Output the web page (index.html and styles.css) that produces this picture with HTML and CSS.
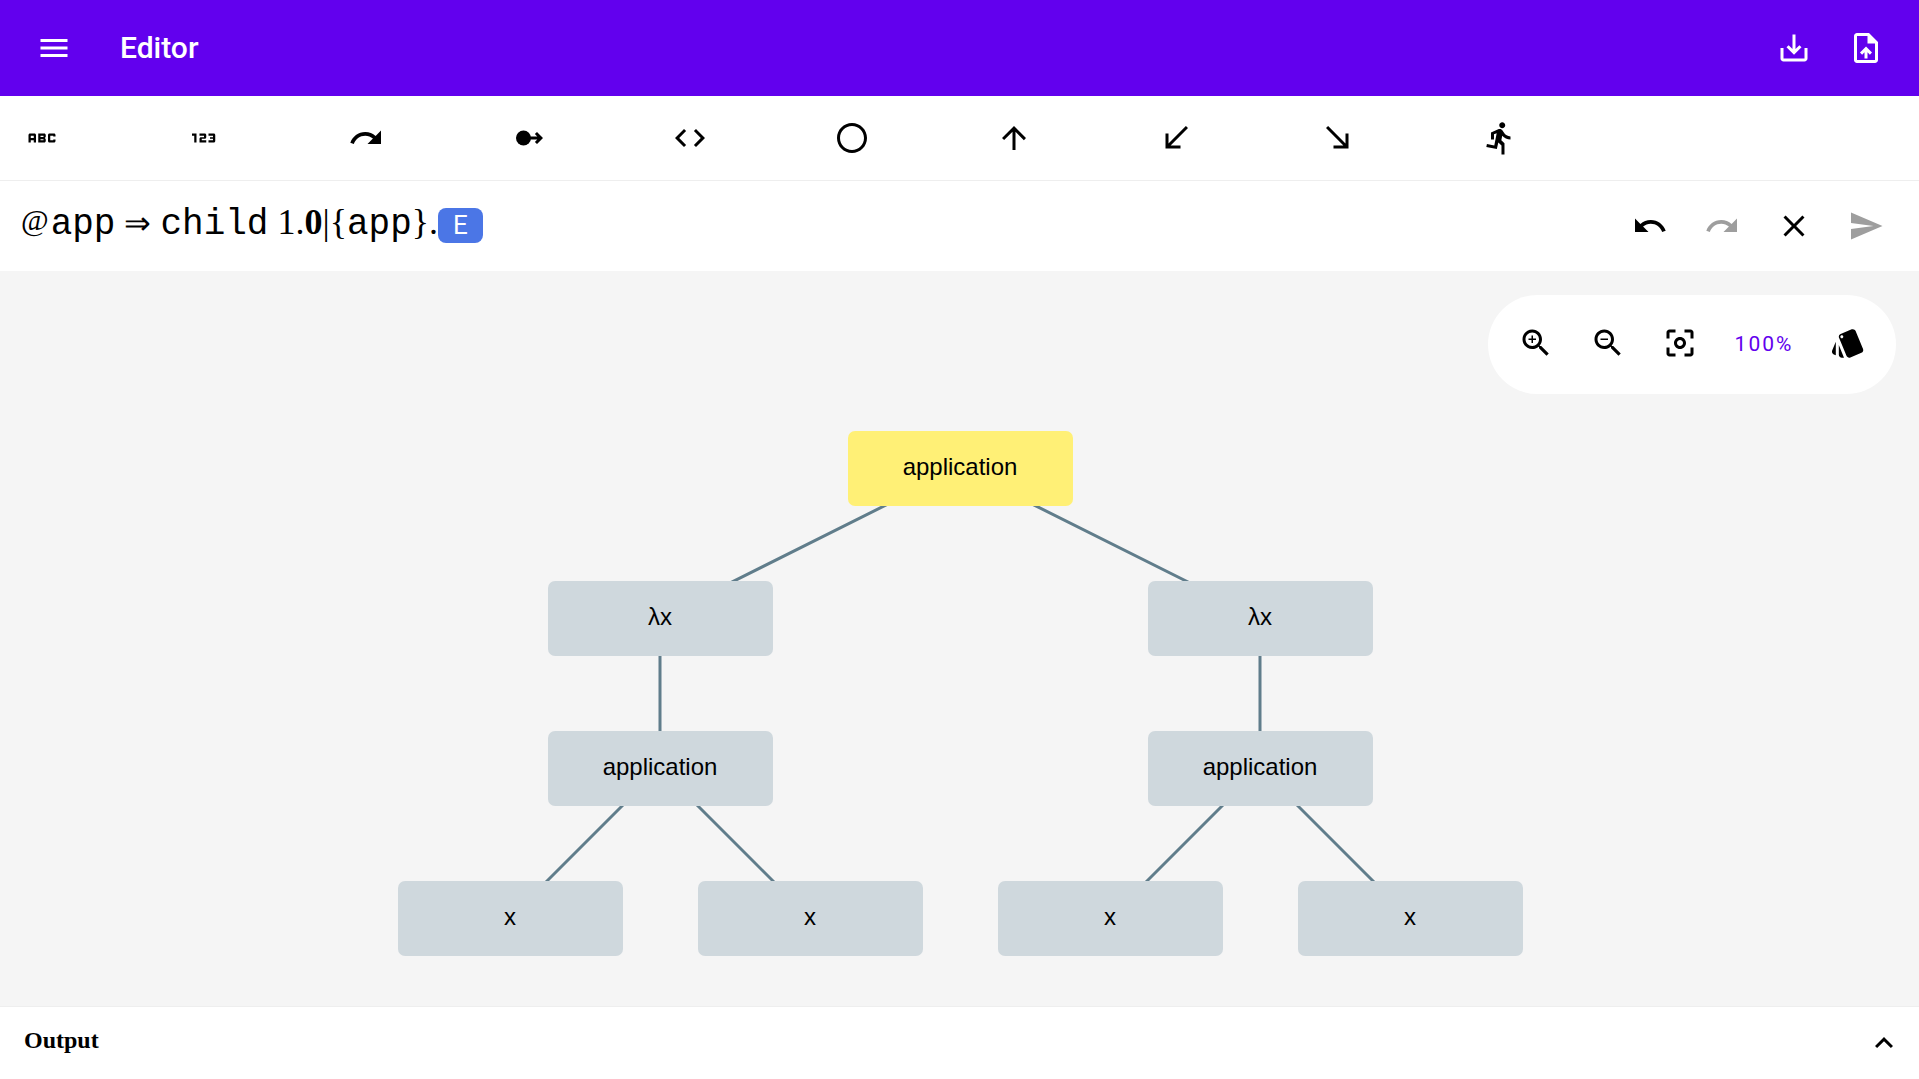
FILE: index.html
```html
<!DOCTYPE html>
<html lang="en">
<head>
<meta charset="utf-8">
<meta name="viewport" content="width=device-width, initial-scale=1">
<title>Editor</title>
<link rel="stylesheet" href="styles.css">
</head>
<body>
<header class="app-bar">
  <button class="icon-button" aria-label="Menu"><svg viewBox="0 0 24 24"><path d="M3 18h18v-2H3v2zm0-5h18v-2H3v2zm0-7v2h18V6H3z"/></svg></button>
  <h1 class="app-title">Editor</h1>
  <button class="icon-button" aria-label="Download"><svg viewBox="0 0 24 24"><path d="M19 12v7H5v-7H3v7c0 1.1.9 2 2 2h14c1.1 0 2-.9 2-2v-7h-2zm-6 .67 2.59-2.58L17 11.5l-5 5-5-5 1.41-1.41L11 12.67V3h2v9.67z"/></svg></button>
  <button class="icon-button" aria-label="Upload file"><svg viewBox="0 0 24 24"><path d="M14 2H6c-1.1 0-1.99.9-1.99 2L4 20c0 1.1.89 2 1.99 2H18c1.1 0 2-.9 2-2V8l-6-6zm4 18H6V4h7v5h5v11zM8 15.01l1.41 1.41L11 14.84V19h2v-4.16l1.59 1.59L16 15.01 12.01 11 8 15.01z"/></svg></button>
</header>

<div class="symbol-bar" role="toolbar" aria-label="Symbols">
  <button class="icon-button" aria-label="Text"><svg viewBox="0 0 24 24"><path d="M21 11h-1.5v-.5h-2v3h2V13H21v1c0 .55-.45 1-1 1h-3c-.55 0-1-.45-1-1v-4c0-.55.45-1 1-1h3c.55 0 1 .45 1 1v1zM8 10v5H6.5v-1.5h-2V15H3v-5c0-.55.45-1 1-1h3c.55 0 1 .45 1 1zm-1.5.5h-2V12h2v-1.5zm7 1.5c.55 0 1 .45 1 1v1c0 .55-.45 1-1 1h-4V9h4c.55 0 1 .45 1 1v1c0 .55-.45 1-1 1zM11 10.5v.75h2v-.75h-2zm2 2.25h-2v.75h2v-.75z"/></svg></button>
  <button class="icon-button" aria-label="Number"><svg viewBox="0 0 24 24"><path d="M7 15H5.5v-4.5H4V9h3v6zm6.5-1.5h-3v-1h2c.55 0 1-.45 1-1V10c0-.55-.45-1-1-1H9v1.5h3v1h-2c-.55 0-1 .45-1 1V15h4.5v-1.5zm6 .5v-4c0-.55-.45-1-1-1H15v1.5h3v1h-2v1h2v1h-3V15h3.5c.55 0 1-.45 1-1z"/></svg></button>
  <button class="icon-button" aria-label="Next"><svg viewBox="0 0 24 24"><path d="M18.4 10.6C16.55 8.99 14.15 8 11.5 8c-4.65 0-8.58 3.03-9.96 7.22L3.9 16c1.05-3.19 4.05-5.5 7.6-5.5 1.95 0 3.73.72 5.12 1.88L13 16h9V7l-3.6 3.6z"/></svg></button>
  <button class="icon-button" aria-label="Source"><svg viewBox="0 0 24 24"><circle cx="9" cy="12" r="5"/><path d="M18.17 11l-1.59-1.59L18 8l4 4-4 4-1.41-1.41L18.17 13H12v-2z"/></svg></button>
  <button class="icon-button" aria-label="Code"><svg viewBox="0 0 24 24"><path d="M9.4 16.6 4.8 12l4.6-4.6L8 6l-6 6 6 6 1.4-1.4zm5.2 0 4.6-4.6-4.6-4.6L16 6l6 6-6 6-1.4-1.4z"/></svg></button>
  <button class="icon-button" aria-label="Node"><svg viewBox="0 0 24 24"><path d="M12 2C6.47 2 2 6.47 2 12s4.47 10 10 10 10-4.47 10-10S17.53 2 12 2zm0 18c-4.41 0-8-3.59-8-8s3.59-8 8-8 8 3.59 8 8-3.59 8-8 8z"/></svg></button>
  <button class="icon-button" aria-label="Parent"><svg viewBox="0 0 24 24"><path d="m4 12 1.41 1.41L11 7.83V20h2V7.83l5.58 5.59L20 12l-8-8-8 8z"/></svg></button>
  <button class="icon-button" aria-label="Left child"><svg viewBox="0 0 24 24"><path d="M20 5.41 18.59 4 7 15.59V9H5v10h10v-2H8.41z"/></svg></button>
  <button class="icon-button" aria-label="Right child"><svg viewBox="0 0 24 24"><path d="M4 5.41 5.41 4 17 15.59V9h2v10H9v-2h6.59z"/></svg></button>
  <button class="icon-button" aria-label="Run"><svg viewBox="0 0 24 24"><path d="M13.49 5.48c1.1 0 2-.9 2-2s-.9-2-2-2-2 .9-2 2 .9 2 2 2zm-3.6 13.9 1-4.4 2.1 2v6h2v-7.5l-2.1-2 .6-3c1.3 1.5 3.3 2.5 5.5 2.5v-2c-1.9 0-3.5-1-4.3-2.4l-1-1.6c-.4-.6-1-1-1.7-1-.3 0-.5.1-.8.1l-5.2 2.2v4.7h2v-3.4l1.8-.7-1.6 8.1-4.9-1-.4 2 7 1.4z"/></svg></button>
</div>

<div class="command-bar">
  <div class="expression" role="textbox" aria-label="Expression" tabindex="0"><span class="at">@</span><code>app</code> <span class="arrow">⇒</span> <code>child</code> 1.<b>0</b>|{<code>app</code>}.<span class="chip">E</span></div>
  <button class="icon-button" aria-label="Undo"><svg viewBox="0 0 24 24"><path d="M12.5 8c-2.65 0-5.05.99-6.9 2.6L2 7v9h9l-3.62-3.62c1.39-1.16 3.16-1.88 5.12-1.88 3.54 0 6.55 2.31 7.6 5.5l2.37-.78C21.08 11.03 17.15 8 12.5 8z"/></svg></button>
  <button class="icon-button" aria-label="Redo" disabled><svg viewBox="0 0 24 24"><path d="M18.4 10.6C16.55 8.99 14.15 8 11.5 8c-4.65 0-8.58 3.03-9.96 7.22L3.9 16c1.05-3.19 4.05-5.5 7.6-5.5 1.95 0 3.73.72 5.12 1.88L13 16h9V7l-3.6 3.6z"/></svg></button>
  <button class="icon-button" aria-label="Clear"><svg viewBox="0 0 24 24"><path d="M19 6.41 17.59 5 12 10.59 6.41 5 5 6.41 10.59 12 5 17.59 6.41 19 12 13.41 17.59 19 19 17.59 13.41 12z"/></svg></button>
  <button class="icon-button" aria-label="Send" disabled><svg viewBox="0 0 24 24"><path d="M2.01 21 23 12 2.01 3 2 10l15 2-15 2z"/></svg></button>
</div>

<main class="canvas">
  <svg class="tree" viewBox="0 0 1125 525" role="img" aria-label="Syntax tree">
    <g class="edges">
      <path d="M562 37 262 187M562 37l300 150M262 187v150M862 187v150M262 337 112 487M262 337l150 150M862 337 712 487M862 337l150 150"/>
    </g>
    <g class="nodes">
      <rect class="selected" x="450" y="0" width="225" height="75" rx="7"/>
      <rect x="150" y="150" width="225" height="75" rx="7"/>
      <rect x="750" y="150" width="225" height="75" rx="7"/>
      <rect x="150" y="300" width="225" height="75" rx="7"/>
      <rect x="750" y="300" width="225" height="75" rx="7"/>
      <rect x="0" y="450" width="225" height="75" rx="7"/>
      <rect x="300" y="450" width="225" height="75" rx="7"/>
      <rect x="600" y="450" width="225" height="75" rx="7"/>
      <rect x="900" y="450" width="225" height="75" rx="7"/>
    </g>
    <g class="labels">
      <text x="562" y="44">application</text>
      <text x="262" y="194">λx</text>
      <text x="862" y="194">λx</text>
      <text x="262" y="344">application</text>
      <text x="862" y="344">application</text>
      <text x="112" y="494">x</text>
      <text x="412" y="494">x</text>
      <text x="712" y="494">x</text>
      <text x="1012" y="494">x</text>
    </g>
  </svg>
  <div class="zoom-panel" role="toolbar" aria-label="Zoom">
    <button class="icon-button" aria-label="Zoom in"><svg viewBox="0 0 24 24"><path d="M15.5 14h-.79l-.28-.27C15.41 12.59 16 11.11 16 9.5 16 5.91 13.09 3 9.5 3S3 5.91 3 9.5 5.91 16 9.5 16c1.61 0 3.09-.59 4.23-1.57l.27.28v.79l5 4.99L20.49 19l-4.99-5zm-6 0C7.01 14 5 11.99 5 9.5S7.01 5 9.5 5 14 7.01 14 9.5 11.99 14 9.5 14zm2.5-4h-2v2H9v-2H7V9h2V7h1v2h2v1z"/></svg></button>
    <button class="icon-button" aria-label="Zoom out"><svg viewBox="0 0 24 24"><path d="M15.5 14h-.79l-.28-.27C15.41 12.59 16 11.11 16 9.5 16 5.91 13.09 3 9.5 3S3 5.91 3 9.5 5.91 16 9.5 16c1.61 0 3.09-.59 4.23-1.57l.27.28v.79l5 4.99L20.49 19l-4.99-5zm-6 0C7.01 14 5 11.99 5 9.5S7.01 5 9.5 5 14 7.01 14 9.5 11.99 14 9.5 14zM7 9h5v1H7z"/></svg></button>
    <button class="icon-button" aria-label="Center"><svg viewBox="0 0 24 24"><path d="M5 15H3v4c0 1.1.9 2 2 2h4v-2H5v-4zM5 5h4V3H5c-1.1 0-2 .9-2 2v4h2V5zm14-2h-4v2h4v4h2V5c0-1.1-.9-2-2-2zm0 16h-4v2h4c1.1 0 2-.9 2-2v-4h-2v4zM12 8c-2.21 0-4 1.79-4 4s1.79 4 4 4 4-1.79 4-4-1.79-4-4-4zm0 6c-1.1 0-2-.9-2-2s.9-2 2-2 2 .9 2 2-.9 2-2 2z"/></svg></button>
    <button class="zoom-level">100%</button>
    <button class="icon-button" aria-label="Style"><svg viewBox="0 0 24 24"><path d="M2.53 19.65l1.34.56v-9.03l-2.43 5.86c-.41 1.02.08 2.19 1.09 2.61zm19.5-3.7L17.07 3.98c-.31-.75-1.04-1.21-1.81-1.23-.26 0-.53.04-.79.15L7.1 5.95c-.75.31-1.21 1.03-1.23 1.8-.01.27.04.54.15.8l4.96 11.97c.31.76 1.05 1.22 1.83 1.23.26 0 .52-.05.77-.15l7.36-3.05c1.02-.42 1.51-1.59 1.09-2.6zM7.88 8.75c-.55 0-1-.45-1-1s.45-1 1-1 1 .45 1 1-.45 1-1 1zm-2 11c0 1.1.9 2 2 2h1.45l-3.45-8.34v6.34z"/></svg></button>
  </div>
</main>

<section class="output">
  <h2 class="output-title">Output</h2>
  <button class="icon-button compact" aria-label="Expand output"><svg viewBox="0 0 24 24"><path d="m12 8-6 6 1.41 1.41L12 10.83l4.59 4.58L18 14z"/></svg></button>
</section>
</body>
</html>
```
FILE: styles.css
```css
* {
  box-sizing: border-box;
}

body {
  margin: 0;
  min-height: 100vh;
  display: flex;
  flex-direction: column;
  background: #fff;
  color: #000;
  font-family: "Liberation Serif", serif;
}

button {
  border: 0;
  background: none;
  color: inherit;
  cursor: pointer;
}

.icon-button {
  display: block;
  flex: none;
  width: 72px;
  height: 72px;
  padding: 18px;
}

.icon-button.compact {
  width: 36px;
  height: 36px;
  padding: 0;
}

.icon-button:disabled {
  color: #9e9e9e;
  cursor: default;
}

.icon-button svg {
  display: block;
  width: 36px;
  height: 36px;
  fill: currentColor;
}

.app-bar {
  display: flex;
  align-items: center;
  padding: 12px 17px 12px 18px;
  background: #6200ee;
  color: #fff;
}

.app-title {
  flex: 1;
  margin: 0;
  padding-left: 30px;
  font: 500 30px/48px Roboto, sans-serif;
}

.symbol-bar {
  display: grid;
  grid-template-columns: repeat(12, 1fr);
  column-gap: 25px;
  padding: 6px 0;
  border-bottom: 1px solid #eee;
}

.symbol-bar .icon-button {
  margin-left: 6px;
}

.command-bar {
  display: flex;
  align-items: center;
  padding: 9px 17px 9px 18px;
}

.expression {
  flex: 1;
  font-size: 36px;
  line-height: 42px;
  padding-bottom: 6px;
  outline: 0;
}

.expression code {
  font-family: "Liberation Mono", monospace;
  font-size: 36px;
}

.at {
  padding: 0 2px 0 3px;
  font-size: 30px;
  line-height: 30px;
  vertical-align: 4px;
}

.arrow {
  font-size: 32px;
  line-height: 32px;
}

.chip {
  display: inline-block;
  padding: 0 15px;
  border-radius: 8px;
  background: #4b76e6;
  color: #fff;
  font: 400 26px/35px Roboto, sans-serif;
}

.canvas {
  position: relative;
  flex: 1;
  padding: 160px 23px 48px 25px;
  background: #f5f5f5;
}

.tree {
  display: block;
  width: 1125px;
  margin: 0 auto;
}

.edges {
  fill: none;
  stroke: #607d8b;
  stroke-width: 3;
}

.nodes {
  fill: #cfd8dd;
}

.nodes .selected {
  fill: #fff076;
}

.labels {
  font: 24px "Liberation Sans", sans-serif;
  text-anchor: middle;
}

.zoom-panel {
  position: absolute;
  top: 24px;
  right: 23px;
  display: flex;
  padding: 12px 12px 15px;
  border-radius: 50px;
  background: #fff;
}

.zoom-level {
  width: 96px;
  padding: 2px 0 0;
  color: #6200ee;
  font: 400 21px/32px Roboto, sans-serif;
  letter-spacing: 2px;
}

.output {
  display: flex;
  align-items: center;
  justify-content: space-between;
  padding: 18px 17px 18px 24px;
  border-top: 1px solid #eee;
}

.output-title {
  margin: 0;
  padding-bottom: 6px;
  font-size: 24px;
  line-height: 30px;
}
```
